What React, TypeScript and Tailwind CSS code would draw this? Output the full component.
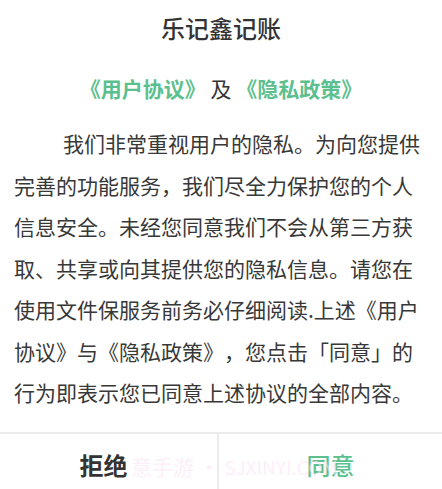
import React from "react";

export default function App() {
  return (
    <div
      className="relative w-[442px] h-[489px] overflow-hidden bg-white [text-spacing-trim:space-all]"
      style={{ fontFamily: '"Noto Sans CJK SC", "Noto Sans", sans-serif' }}
    >
      <div className="flex flex-col">
        <h1 className="pt-[14px] text-center text-[24px] leading-[28px] font-medium text-[#333333]">
          乐记鑫记账
        </h1>
        <p className="mt-[32px] text-center text-[21px] leading-[28px] text-[#333333]">
          <span className="font-bold text-[#5cc08e]">《用户协议》</span> 及{" "}
          <span className="font-bold text-[#5cc08e]">《隐私政策》</span>
        </p>
        <p className="mt-[21px] px-[14px] pb-[18px] text-[21px] leading-[41.5px] indent-[49px] text-[#383838]">
          我们非常重视用户的隐私。为向您提供完善的功能服务，我们尽全力保护您的个人信息安全。未经您同意我们不会从第三方获取、共享或向其提供您的隐私信息。请您在使用文件保服务前务必仔细阅读.上述《用户协议》与《隐私政策》，您点击「同意」的行为即表示您已同意上述协议的全部内容。
        </p>
        <div className="flex h-[64px] border-t-2 border-[#ebebeb]">
          <button className="w-[217px] shrink-0 flex items-center justify-center pr-[10px] text-[24px] font-semibold text-[#333333]">
            拒绝
          </button>
          <div className="w-[2px] bg-[#ebebeb]" />
          <button className="flex-1 flex items-center justify-center text-[24px] font-medium text-[#5cc08e]">
            同意
          </button>
        </div>
      </div>
      <div className="pointer-events-none absolute left-[131px] top-[452px] whitespace-nowrap text-[21px] leading-[28px] text-[#fbe6f7] opacity-60">
        意手游 • <span className="text-[19px]">SJXINYI.COM</span>
      </div>
    </div>
  );
}
